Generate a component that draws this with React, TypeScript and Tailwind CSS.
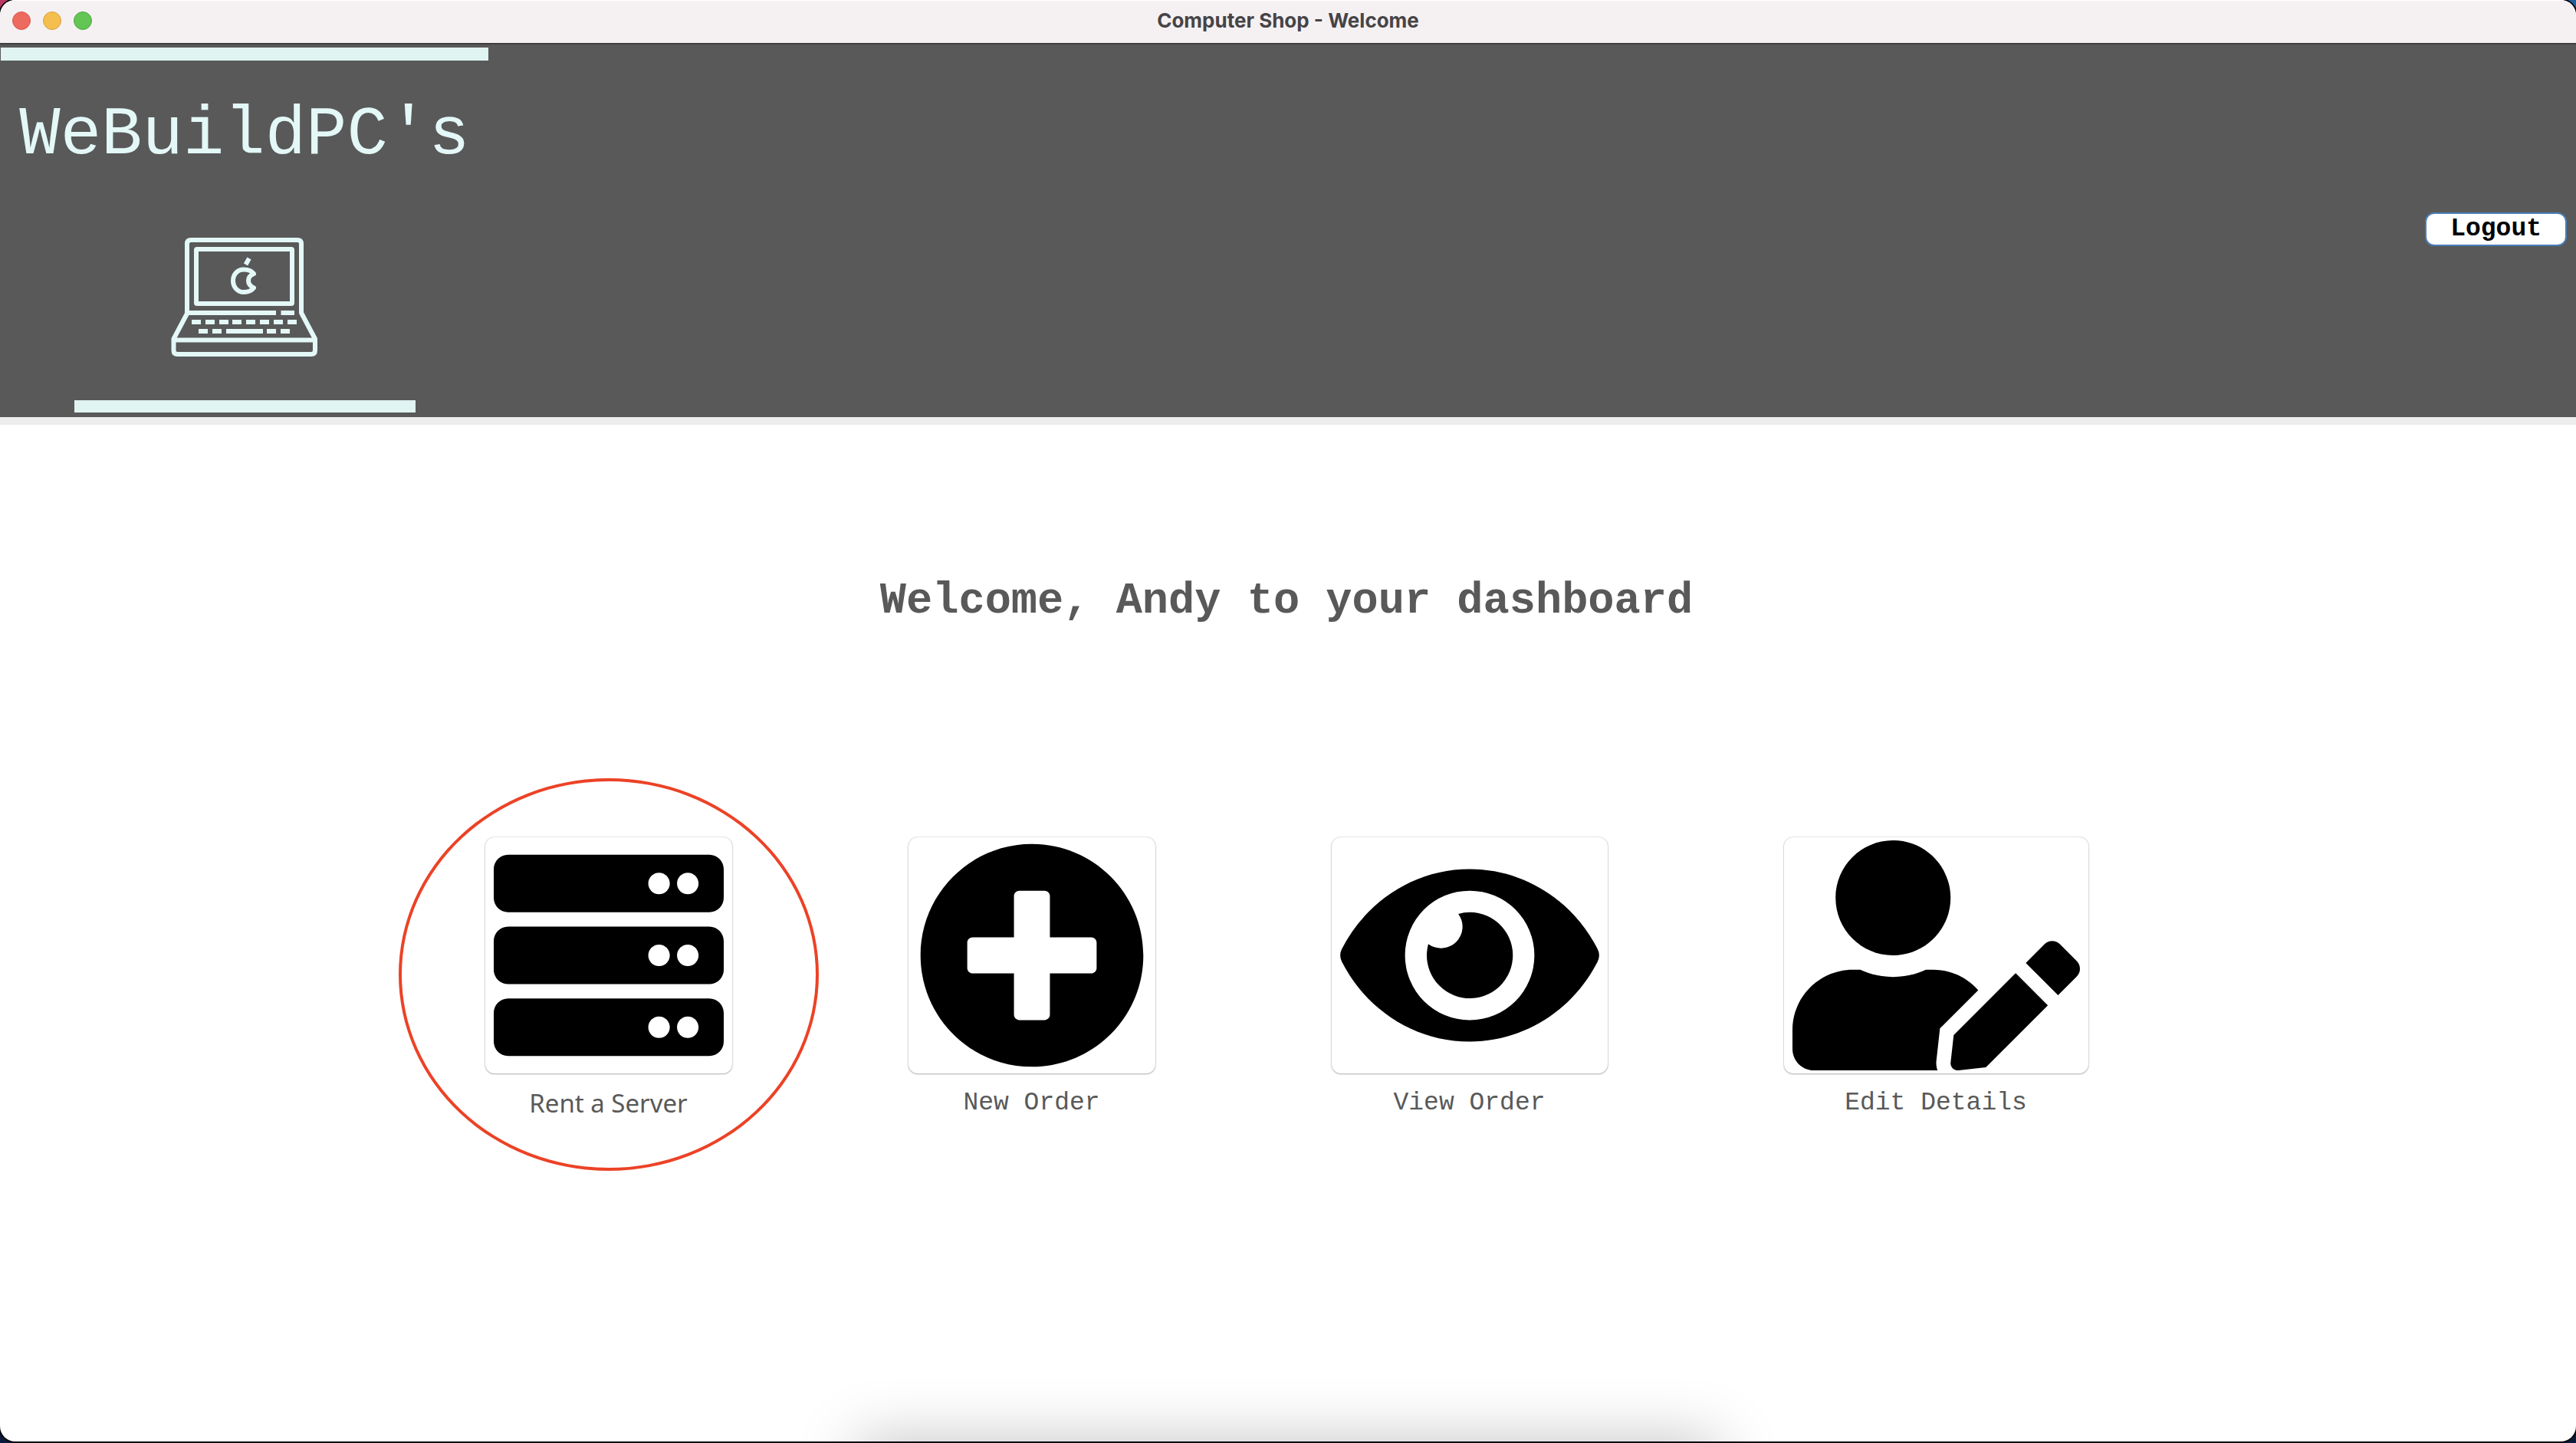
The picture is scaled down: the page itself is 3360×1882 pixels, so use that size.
import type { ComponentType } from "react";
import { FaEye, FaPlusCircle, FaServer, FaUserEdit } from "react-icons/fa";

type Action = {
  id: string;
  label: string;
  icon: ComponentType<{ className?: string }>;
  iconWidth: string;
  labelFont: string;
  highlighted?: boolean;
};

const MONO = "font-['Liberation_Mono',monospace]";

const actions: Action[] = [
  {
    id: "rent-server",
    label: "Rent a Server",
    icon: FaServer,
    iconWidth: "w-[300px]",
    labelFont: "font-['Noto_Sans',sans-serif]",
    highlighted: true,
  },
  { id: "new-order", label: "New Order", icon: FaPlusCircle, iconWidth: "w-[300px]", labelFont: MONO },
  { id: "view-order", label: "View Order", icon: FaEye, iconWidth: "w-[338px]", labelFont: MONO },
  { id: "edit-details", label: "Edit Details", icon: FaUserEdit, iconWidth: "w-[375px]", labelFont: MONO },
];

function TitleBar() {
  return (
    <div className="relative flex h-14 shrink-0 items-center justify-center bg-[#f5f1f3] pb-0.5 shadow-[inset_0_1px_0_#ffffff]">
      <div className="absolute left-4 flex gap-4">
        <button aria-label="Close" className="size-6 rounded-full border border-[#d9564c] bg-[#ed6a5e]" />
        <button aria-label="Minimise" className="size-6 rounded-full border border-[#d8a03f] bg-[#f5bf4f]" />
        <button aria-label="Zoom" className="size-6 rounded-full border border-[#51a73e] bg-[#62c554]" />
      </div>
      <span className="font-['Inter',sans-serif] text-[26px] leading-8 font-bold text-[#464446]">
        Computer Shop - Welcome
      </span>
    </div>
  );
}

function LaptopLogo() {
  return (
    <svg
      viewBox="224 308 192 158"
      className="mt-[86px] h-[158px] w-48"
      fill="none"
      stroke="#e3f8f7"
      strokeWidth="6"
      strokeLinejoin="round"
      aria-hidden="true"
    >
      <path d="M245 409V318q0-5 5-5h139q5 0 5 5v90l18 34v15q0 5-5 5H232.500q-5 0-5-5v-15l18-34" />
      <rect x="257" y="325" width="125" height="71" rx="1" />
      <path d="M245 408H361M367.500 408H385M229 443.500H411" />
      <path d="M251 420h12m6 0h12m6 0h12m5 0h12m6 0h12m6 0h12m6 0h12m6 0h12" />
      <path d="M260 432h12m6 0h12m6 0h48m5 0h12m6 0h12" />
      <path d="M332 357c-3-4-8-5.500-13-5.500c-8 0-14 6-14 14.500s6 15 14 15c5 0 10-1.500 13-5.500c-5-2.500-7-5-7-9.500s2-7 7-9z" />
      <path d="M321.500 345l4.500-8" />
    </svg>
  );
}

function Header() {
  return (
    <header className="flex shrink-0 items-center justify-between border-t-2 border-[#403e40] bg-[#595959]">
      <div className="flex w-[638px] flex-col items-center pt-1 pb-1.5">
        <div className="h-[17px] w-[636px] bg-[#e0f4f2]" />
        <span className="mt-[53px] font-['Liberation_Mono',monospace] text-[89px] leading-[90px] text-[#e3f8f7]">
          WeBuildPC's
        </span>
        <LaptopLogo />
        <div className="mt-14 h-4 w-[445px] bg-[#e0f4f2]" />
      </div>
      <button className="mr-3 mb-1 h-11 rounded-xl border-2 border-[#4a7db5] bg-white px-[31px] font-['Liberation_Mono',monospace] text-[33px] leading-9 font-bold text-black">
        Logout
      </button>
    </header>
  );
}

function ActionTile({ action }: { action: Action }) {
  const Icon = action.icon;
  return (
    <div className="relative flex flex-col items-center">
      <button
        aria-labelledby={action.id}
        className="rounded-xl bg-white px-[11px] py-1 text-black shadow-[0_0_2px_rgba(0,0,0,0.3),0_1px_2px_rgba(0,0,0,0.25)]"
      >
        <Icon className={`block h-[300px] ${action.iconWidth}`} />
      </button>
      <span id={action.id} className={`mt-[21px] text-[33px] leading-9 text-[#595959] ${action.labelFont}`}>
        {action.label}
      </span>
      {action.highlighted && (
        <div className="pointer-events-none absolute -top-[77px] left-1/2 h-[512px] w-[548px] -translate-x-1/2 rounded-[50%] border-4 border-[#ec4226]" />
      )}
    </div>
  );
}

export default function App() {
  return (
    <div className="min-h-screen bg-[linear-gradient(to_right,#b8385f,#20609c)]">
      <div className="flex min-h-screen flex-col bg-[linear-gradient(to_bottom,transparent_50%,#0b1a38_50%)]">
        <div className="relative mb-0.5 flex grow flex-col overflow-hidden rounded-[20px] bg-white shadow-[0_0_0_2px_#05060c]">
          <TitleBar />
          <Header />
          <div className="h-2.5 shrink-0 bg-[#ededed]" />
          <main className="flex flex-col items-center pt-[198px] pr-1 pb-20">
            <h1 className="font-['Liberation_Mono',monospace] text-[57px] leading-16 font-bold text-[#595959]">
              Welcome, Andy to your dashboard
            </h1>
            <div className="mt-[276px] flex justify-center gap-[230px]">
              {actions.map((action) => (
                <ActionTile key={action.id} action={action} />
              ))}
            </div>
          </main>
          <div className="pointer-events-none absolute inset-x-1/3 top-full h-20 shadow-[0_0_80px_rgba(0,0,0,0.25)]" />
        </div>
      </div>
    </div>
  );
}
